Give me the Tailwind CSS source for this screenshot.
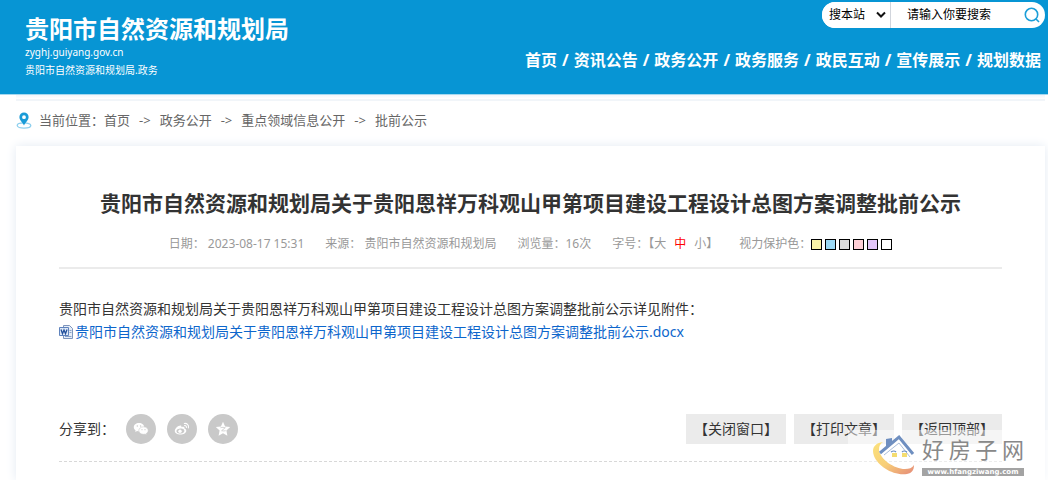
<!DOCTYPE html>
<html lang="zh-CN">
<head>
  <meta charset="UTF-8">
  <meta name="viewport" content="width=device-width, initial-scale=1.0">
  <title>贵阳市自然资源和规划局</title>
  <script src="https://cdn.jsdelivr.net/npm/@tailwindcss/browser@4"></script>
</head>
<body class="relative min-h-screen flex flex-col overflow-x-hidden bg-white text-[#333] font-['Noto_Sans','Noto_Sans_CJK_SC',sans-serif]">
  <header class="flex justify-between bg-[#0795d4] text-white border-b border-[#a5d8ef] pb-[13px]">
    <div class="pl-[25px] pt-[13px]">
      <p class="text-2xl leading-8 font-bold">贵阳市自然资源和规划局</p>
      <p class="text-[10px] leading-[14px]">zyghj.guiyang.gov.cn</p>
      <p class="text-[10px] leading-[22px]">贵阳市自然资源和规划局.政务</p>
    </div>
    <div class="flex flex-col items-end pt-0.5">
      <form class="flex h-[26px] mr-[3px] rounded-full bg-white overflow-hidden text-xs text-black">
        <div class="relative flex border-r border-gray-300">
          <select aria-label="搜索范围" class="appearance-none w-[68px] pl-[7px] text-xs bg-white outline-none">
            <option>搜本站</option>
          </select>
          <svg class="absolute right-1 top-[9px] pointer-events-none" width="10" height="8" viewBox="0 0 10 8" fill="none" stroke="#111" stroke-width="2"><path d="M1 1.5l4 4 4-4"/></svg>
        </div>
        <input aria-label="关键词" type="text" placeholder="请输入你要搜索" class="w-[101px] pl-4 text-xs placeholder:text-black outline-none">
        <button type="submit" aria-label="搜索" class="w-[53px] flex items-center justify-end pr-[5px]">
          <svg width="16" height="16" viewBox="0 0 16 16" fill="none" stroke="#1b9ed8" stroke-width="1.6"><circle cx="7.5" cy="7.5" r="6.2"/><path d="M12 12l3 3"/></svg>
        </button>
      </form>
      <nav class="flex gap-[5px] mr-[7px] mt-5 text-base leading-6 font-bold whitespace-nowrap">
        <a href="#">首页</a><span>/</span>
        <a href="#">资讯公告</a><span>/</span>
        <a href="#">政务公开</a><span>/</span>
        <a href="#">政务服务</a><span>/</span>
        <a href="#">政民互动</a><span>/</span>
        <a href="#">宣传展示</a><span>/</span>
        <a href="#">规划数据</a>
      </nav>
    </div>
  </header>

  <div class="ml-4 mr-[3px] flex-1 flex flex-col">
    <div class="h-1.5 bg-linear-to-b from-[#f1f5fa] to-white border-b-2 border-[#f1f5f9]"></div>

    <!-- breadcrumb -->
    <nav class="flex items-center gap-[9px] pt-1.5 pb-[13px] text-[13px] leading-[26px] text-[#666]">
      <svg class="-mr-0.5" width="16" height="17" viewBox="0 0 15 17">
        <ellipse cx="7.5" cy="13.5" rx="6.8" ry="2.6" fill="#fff" stroke="#8fd0ee" stroke-width="1.3"/>
        <path fill="#1a9bd7" fill-rule="evenodd" d="M7.500 0.500a4.600 4.600 0 0 0-4.600 4.600c0 3.200 3.100 5.400 4.600 8.400 1.500-3 4.600-5.200 4.600-8.400a4.600 4.600 0 0 0-4.600-4.600zM7.500 3.300a1.900 1.900 0 1 1 0 3.800 1.900 1.900 0 0 1 0-3.800z"/>
      </svg>
      <span>当前位置：<a href="#">首页</a></span>
      <span>-&gt;</span>
      <a href="#">政务公开</a>
      <span>-&gt;</span>
      <a href="#">重点领域信息公开</a>
      <span>-&gt;</span>
      <a href="#">批前公示</a>
    </nav>

    <main class="flex-1 bg-white px-[43px] pt-10 shadow-[0_0_10px_#e3eaf3]">
      <h1 class="text-center text-[21px] leading-[34px] font-bold whitespace-nowrap">贵阳市自然资源和规划局关于贵阳恩祥万科观山甲第项目建设工程设计总图方案调整批前公示</h1>
      <div class="flex justify-center gap-[21px] mt-[14px] pb-[13px] border-b-2 border-[#ebebeb] text-xs leading-5 text-[#999] whitespace-nowrap">
        <span>日期： 2023-08-17 15:31</span>
        <span>来源： 贵阳市自然资源和规划局</span>
        <span>浏览量：16次</span>
        <span class="flex">字号：【<button>大</button><button class="mx-2 text-[#f00]">中</button><button>小</button>】</span>
        <span class="flex items-center">视力保护色：
          <span class="flex gap-[3px]">
            <button aria-label="黄色" class="size-[11px] border border-black bg-[#faf4a8]"></button>
            <button aria-label="蓝色" class="size-[11px] border border-black bg-[#9cd9f5]"></button>
            <button aria-label="灰色" class="size-[11px] border border-black bg-[#dcdcdc]"></button>
            <button aria-label="粉色" class="size-[11px] border border-black bg-[#ffcfd6]"></button>
            <button aria-label="紫色" class="size-[11px] border border-black bg-[#e2c5f8]"></button>
            <button aria-label="白色" class="size-[11px] border border-black bg-white"></button>
          </span>
        </span>
      </div>

      <div class="mt-7 text-sm leading-[23px]">
        <p>贵阳市自然资源和规划局关于贵阳恩祥万科观山甲第项目建设工程设计总图方案调整批前公示详见附件：</p>
        <p class="flex items-center gap-0.5">
          <svg width="14" height="14" viewBox="0 0 14 14">
            <path d="M4.500 0.500h6l3 3v10h-9z" fill="#e6edf7" stroke="#7d95bd"/>
            <path d="M10.500 5.500h2M10.500 7.500h2M6 11.500h6.500" stroke="#8aa2c8"/>
            <path d="M0.500 2.500h9v8h-9z" fill="#dfe9f7" stroke="#5f83bd"/>
            <path d="M2 4.500l1.500 4.200L5 5l1.500 3.700L8 4.500" fill="none" stroke="#22509c" stroke-width="1.300"/>
          </svg>
          <a href="#" class="text-[#0d66cc]">贵阳市自然资源和规划局关于贵阳恩祥万科观山甲第项目建设工程设计总图方案调整批前公示.docx</a>
        </p>
      </div>

      <div class="flex items-center justify-between mt-[71px] pb-[17px] border-b border-dashed border-[#d8d8d8]">
        <div class="flex items-center gap-[11px]">
          <span class="text-sm">分享到：</span>
          <button aria-label="微信" class="size-[30px] rounded-full bg-[#c9c9c9] flex items-center justify-center">
            <svg width="16" height="14" viewBox="0 0 16 14">
              <path fill="#fff" d="M6 1C3 1 .8 2.800.8 5.200c0 1.300.7 2.400 1.800 3.200L2.200 10l1.900-.9c.6.200 1.200.3 1.900.3 3 0 5.200-1.900 5.200-4.200S9 1 6 1z"/>
              <path fill="#fff" stroke="#c9c9c9" stroke-width=".6" d="M10.500 4.800c-2.600 0-4.700 1.700-4.700 3.800s2.100 3.700 4.700 3.700c.6 0 1.100-.1 1.600-.2l1.600.9-.4-1.500c1.200-.7 1.900-1.700 1.900-2.900 0-2.100-2.100-3.800-4.700-3.800z"/>
              <g fill="#c9c9c9"><circle cx="4.300" cy="4" r=".7"/><circle cx="7.600" cy="4" r=".7"/><circle cx="9" cy="7.700" r=".6"/><circle cx="12" cy="7.700" r=".6"/></g>
            </svg>
          </button>
          <button aria-label="微博" class="size-[30px] rounded-full bg-[#c9c9c9] flex items-center justify-center">
            <svg width="16" height="14" viewBox="0 0 16 14" fill="none">
              <path fill="#fff" d="M6.500 3.500C4 3.500.8 6.500.8 9c0 2 2.500 3.600 5.600 3.600 3.300 0 5.900-1.800 5.900-3.800 0-1.200-.9-1.900-1.900-2.200.3-1-.1-1.700-1.100-1.800-.6 0-1.200.1-1.900.4.200-1-.1-1.700-.9-1.700z"/>
              <ellipse cx="6.400" cy="9" rx="4" ry="2.500" fill="#c9c9c9" transform="rotate(-8 6.400 9)"/>
              <circle cx="6" cy="9.200" r="1.700" fill="#fff"/>
              <path stroke="#fff" stroke-width="1.100" stroke-linecap="round" d="M10.300 1.500c2.600-.5 4.800 1.600 4.100 4.400M10.600 3.600c1.200-.2 2.100.7 1.800 1.900"/>
            </svg>
          </button>
          <button aria-label="QQ空间" class="size-[30px] rounded-full bg-[#c9c9c9] flex items-center justify-center">
            <svg width="16" height="16" viewBox="0 0 16 16">
              <path fill="#fff" d="M8 .8l2.100 4.700 5.100.6-3.800 3.500 1 5.100L8 12.200l-4.400 2.500 1-5.100L.8 6.100l5.100-.6z"/>
              <path fill="none" stroke="#c9c9c9" stroke-width=".8" d="M5.500 6.700c1.800-.5 3.400-.4 4.800 0L6.600 9.700c1.500.4 2.900.3 4.100 0"/>
            </svg>
          </button>
        </div>
        <div class="flex gap-2 text-sm">
          <button class="h-[30px] w-[100px] bg-[#ebebeb] whitespace-nowrap">【关闭窗口】</button>
          <button class="h-[30px] w-[100px] bg-[#ebebeb] whitespace-nowrap">【打印文章】</button>
          <button class="h-[30px] w-[100px] bg-[#ebebeb] whitespace-nowrap">【返回顶部】</button>
        </div>
      </div>
    </main>
  </div>

  <!-- watermark -->
  <div class="absolute right-0 bottom-0 w-[200px] h-[50px] pl-6 flex gap-1 bg-white/50 pointer-events-none">
    <svg width="46" height="48" viewBox="0 0 46 48" fill="none">
      <defs>
        <linearGradient id="swoosh" x1="0" y1="0" x2="1" y2="1">
          <stop offset="0" stop-color="#fbe27c"/>
          <stop offset=".5" stop-color="#f8cf78"/>
          <stop offset="1" stop-color="#e58a78"/>
        </linearGradient>
      </defs>
      <path fill="url(#swoosh)" d="M11 12C3 13-1 18 2 26c4 10 19 20 33 18 5-1 7-4 7-9-2 3-5 4-9 4C22 39 8 29 7 20c0-4 1-6 4-8z"/>
      <path fill="#6f8fc0" d="M14 9l6-1v4l-6 6z"/>
      <path stroke="#6f8fc0" stroke-width="3" d="M8 23L27 7l14 17"/>
      <path stroke="#a9bddb" d="M12 25L27 13l11 14"/>
      <path stroke="#6f8fc0" stroke-width="1.200" d="M19 22q3-2 5 0M30 22q2-2 5 0"/>
      <path fill="#f4dc70" d="M20 23h5v4h-5zM30 23h5v4h-5z"/>
    </svg>
    <div class="flex flex-col w-[102px]">
      <p class="flex justify-between text-[22px] leading-[38px] text-[#888]"><span>好</span><span>房</span><span>子</span><span>网</span></p>
      <p class="bg-[#a3a3a3] text-center text-[7px] leading-2 font-bold text-white font-['DejaVu_Sans',sans-serif]">www.hfangziwang.com</p>
    </div>
  </div>
</body>
</html>
